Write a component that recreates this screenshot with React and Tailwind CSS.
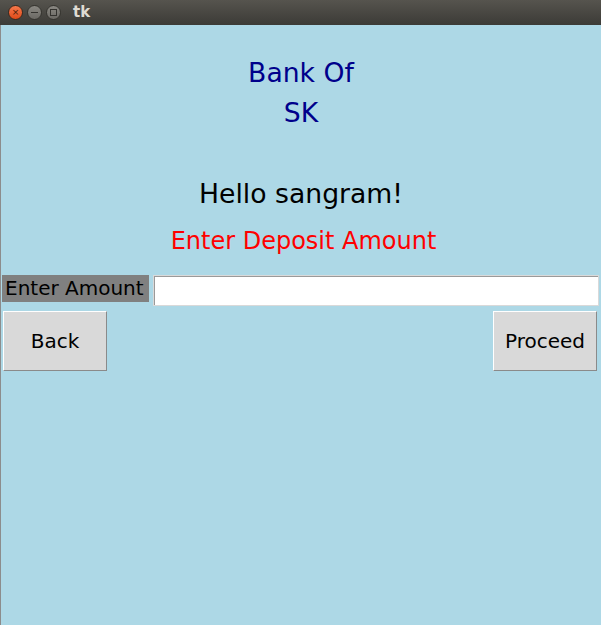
// Tk "deposit" window: title bar, bank header, greeting, amount entry, buttons.

function TitleBar() {
  return (
    <div className="h-[25px] flex items-center bg-gradient-to-b from-[#56544e] to-[#3c3b37] pl-[8px]">
      <div className="w-[15px] h-[15px] rounded-full bg-gradient-to-b from-[#f6784a] to-[#df4a16] border border-[#3a2a20] flex items-center justify-center text-[9px] leading-none text-[#4a1b08]">
        ×
      </div>
      <div className="ml-[4px] w-[15px] h-[15px] rounded-full bg-gradient-to-b from-[#8a8882] to-[#6b6964] border border-[#35342f] flex items-center justify-center">
        <div className="w-[7px] h-[1.5px] bg-[#34332f]" />
      </div>
      <div className="ml-[4px] w-[15px] h-[15px] rounded-full bg-gradient-to-b from-[#8a8882] to-[#6b6964] border border-[#35342f] flex items-center justify-center">
        <div className="w-[7px] h-[7px] border border-[#34332f]" />
      </div>
      <span className="ml-[12px] text-[15px] font-bold text-[#dfdbd2] leading-none">tk</span>
    </div>
  );
}

function TkButton({ children }) {
  return (
    <button className="w-[104px] h-[60px] bg-[#d9d9d9] border border-t-white border-l-white border-r-[#8a8a8a] border-b-[#8a8a8a] text-[20px] text-black">
      {children}
    </button>
  );
}

export default function App() {
  return (
    <div
      className="w-[601px] h-[625px] flex flex-col bg-[#add8e6]"
      style={{ fontFamily: '"DejaVu Sans", sans-serif' }}
    >
      <TitleBar />
      <div className="flex-1 flex flex-col border-l border-[#8c8c8c]">
        <div className="mt-[28px] text-center text-[26.67px] leading-[40px] text-[#00008b]">
          <div>Bank Of</div>
          <div>SK</div>
        </div>
        <div className="mt-[45px] text-center text-[26.67px] leading-[31px] text-black">
          Hello sangram!
        </div>
        <div className="mt-[18px] pl-[5px] text-center text-[24px] leading-[28px] text-[#ff0000]">
          Enter Deposit Amount
        </div>

        <div className="mt-[20px] flex items-start pl-[1px] pr-[2px]">
          <div className="h-[27px] w-[147px] bg-[#808080] pl-[3px] text-[20px] leading-[27px] text-black">
            Enter Amount
          </div>
          <div className="ml-[4px] flex-1 h-[31px] bg-white border border-[#d9d9d9] shadow-[inset_1px_1px_0_#9a9a9a]" />
        </div>

        <div className="mt-[5px] flex justify-between pl-[2px] pr-[4px]">
          <TkButton>Back</TkButton>
          <TkButton>Proceed</TkButton>
        </div>
      </div>
    </div>
  );
}
